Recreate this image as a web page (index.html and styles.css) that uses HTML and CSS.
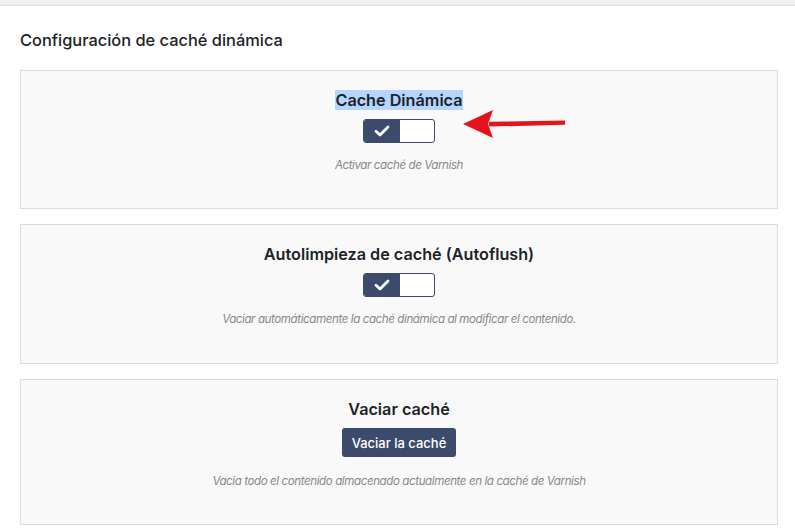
FILE: index.html
```html
<!DOCTYPE html>
<html lang="es">
<head>
  <meta charset="UTF-8" />
  <meta name="viewport" content="width=device-width, initial-scale=1" />
  <title>Configuración de caché dinámica</title>
  <link rel="stylesheet" href="styles.css">
</head>
<body>
  <div class="topbar"></div>
  <div class="wrap">
    <h2 class="page-title">Configuración de caché dinámica</h2>

    <div class="card">
      <h3 class="card-title"><span class="selected">Cache Dinámica</span></h3>
      <div class="toggle">
        <span class="toggle-on">
          <svg width="16" height="12" viewBox="0 0 16 12"><path d="M2 6.2 L6 10 L14 2" fill="none" stroke="#fff" stroke-width="2.8" stroke-linecap="round" stroke-linejoin="round"/></svg>
        </span>
        <span class="toggle-off"></span>
      </div>
      <p class="card-desc">Activar caché de Varnish</p>
      <svg class="arrow" width="110" height="32" viewBox="0 0 110 32">
        <path d="M26 13.8 L102 12.6 L102 16.8 L26 18.6 Z" fill="#e5141b"/>
        <path d="M0 16 L30 2 L25 16 L30 30 Z" fill="#e5141b"/>
      </svg>
    </div>

    <div class="card card-mid">
      <h3 class="card-title">Autolimpieza de caché (Autoflush)</h3>
      <div class="toggle">
        <span class="toggle-on">
          <svg width="16" height="12" viewBox="0 0 16 12"><path d="M2 6.2 L6 10 L14 2" fill="none" stroke="#fff" stroke-width="2.8" stroke-linecap="round" stroke-linejoin="round"/></svg>
        </span>
        <span class="toggle-off"></span>
      </div>
      <p class="card-desc">Vaciar automáticamente la caché dinámica al modificar el contenido.</p>
    </div>

    <div class="card card-action">
      <h3 class="card-title">Vaciar caché</h3>
      <button class="btn">Vaciar la caché</button>
      <p class="card-desc">Vacia todo el contenido almacenado actualmente en la caché de Varnish</p>
    </div>
  </div>
</body>
</html>
```

FILE: styles.css
```css
body {
  margin: 0;
  font-family: Inter, 'Noto Sans', sans-serif;
  color: #1d2327;
  background: #fff;
}

.topbar {
  height: 5px;
  background: #f0f0f0;
  border-bottom: 1px solid #dcdcde;
}

.wrap {
  padding: 0 17px 0 20px;
}

.page-title {
  margin: 24px 0 20px;
  font-size: 16.4px;
  line-height: 20px;
  font-weight: 500;
}

.card {
  position: relative;
  background: #f9f9f9;
  border: 1px solid #dcdcde;
  padding: 19px 20px 20px;
  margin-bottom: 15px;
  display: flex;
  flex-direction: column;
  align-items: center;
}

.card-mid {
  padding-bottom: 21px;
}

.card-title {
  margin: 0;
  font-size: 16.2px;
  line-height: 20px;
  font-weight: 600;
}

.selected {
  background: #b4d5fe;
}

.toggle {
  margin-top: 9px;
  width: 70px;
  height: 22px;
  border: 1px solid #3c4a6b;
  border-radius: 3px;
  display: flex;
  overflow: hidden;
  background: #fff;
}

.toggle-on {
  width: 36px;
  background: #3c4a6b;
  display: flex;
  align-items: center;
  justify-content: center;
}

.toggle-off {
  flex: 1;
}

.btn {
  margin-top: 9px;
  height: 29px;
  padding: 0 10px;
  border: none;
  border-radius: 3px;
  background: #3c4a6b;
  color: #fff;
  font-family: inherit;
  font-size: 13px;
  font-weight: 500;
}

.card-desc {
  margin: 14px 0 15px;
  font-size: 11.6px;
  line-height: 16px;
  letter-spacing: -0.42px;
  font-style: italic;
  color: #86898e;
}

.card-action .card-desc {
  margin-top: 16px;
}

.arrow {
  position: absolute;
  left: 442px;
  top: 37px;
}
```
